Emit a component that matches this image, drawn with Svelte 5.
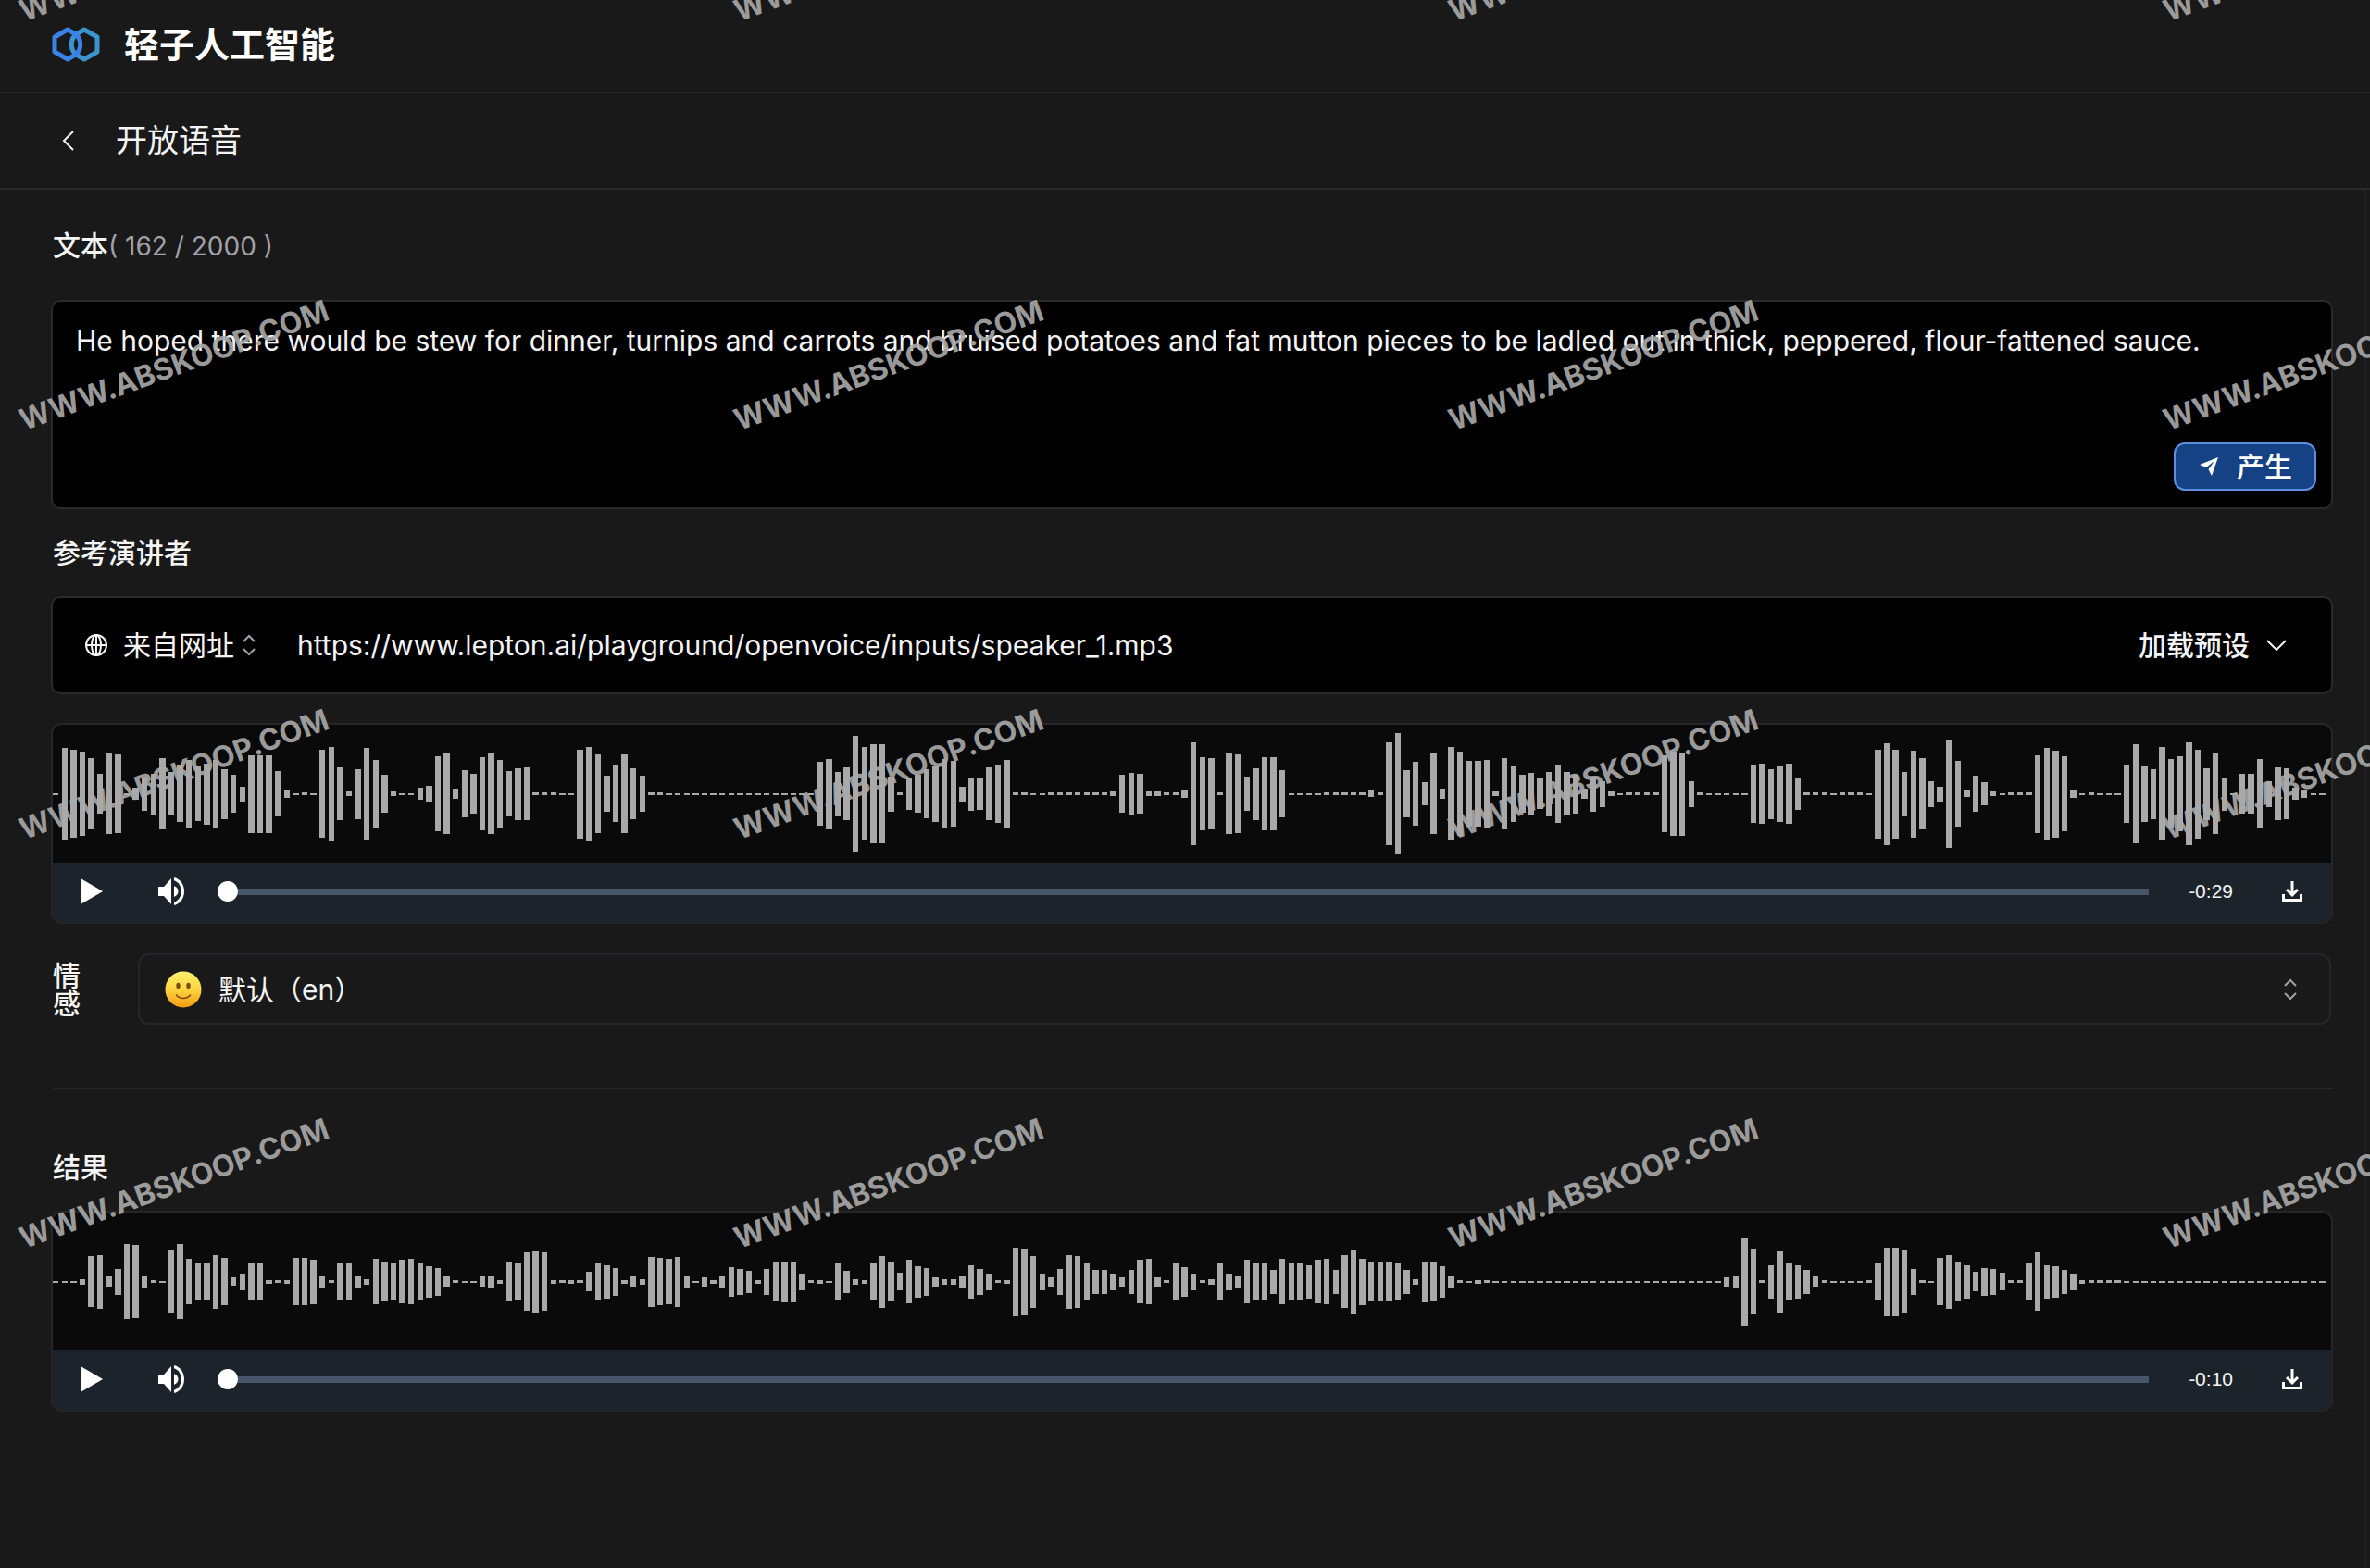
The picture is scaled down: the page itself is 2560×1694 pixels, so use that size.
<script>
  let text = 'He hoped there would be stew for dinner, turnips and carrots and bruised potatoes and fat mutton pieces to be ladled out in thick, peppered, flour-fattened sauce.';
  let url = 'https://www.lepton.ai/playground/openvoice/inputs/speaker_1.mp3';
  let source = 'url';
  let emotion = 'default';

  // bar heights, 256 per clip
  const speaker = [
    2, 99, 95, 91, 77, 43, 87, 85, 2, 13, 36, 44, 77, 47, 61, 74, 59, 66, 74, 54, 41, 16, 84, 84, 84, 49, 8, 2, 3, 2,
    95, 102, 57, 5, 54, 99, 73, 41, 5, 2, 2, 13, 17, 81, 87, 11, 51, 43, 79, 87, 73, 49, 56, 57, 3, 3, 3, 2, 2,
    96, 102, 85, 39, 61, 85, 55, 39, 3, 3, 2, 2, 2, 2, 2, 2, 2, 2, 2, 2, 2, 2, 2, 2, 2, 2, 2,
    69, 76, 48, 57, 126, 101, 107, 107, 38, 3, 34, 41, 53, 60, 75, 71, 16, 36, 34, 57, 62, 73,
    3, 3, 2, 2, 3, 3, 3, 3, 3, 3, 3, 5, 41, 46, 43, 5, 5, 3, 3, 8, 111, 79, 77, 3,
    87, 85, 37, 56, 79, 79, 51, 2, 2, 2, 2, 3, 3, 3, 3, 3, 7, 3, 111, 131, 51, 69, 25, 87, 11, 101, 91, 71, 71, 73, 5,
    77, 60, 41, 46, 33, 48, 62, 47, 42, 11, 38, 28, 5, 2, 3, 3, 3, 3, 83, 91, 90, 28, 3, 2, 2, 2, 2, 2,
    62, 65, 54, 60, 65, 34, 3, 3, 3, 2, 3, 3, 3, 2, 96, 110, 96, 48, 94, 77, 28, 16, 116, 71, 7, 39, 25, 5, 2, 3, 3, 3,
    84, 99, 94, 81, 9, 2, 3, 2, 2, 2, 62, 107, 60, 54, 101, 75, 81, 111, 96, 56, 87, 36, 2, 43, 43, 75, 28, 57, 55, 13, 8, 2, 2
  ];

  const result = [
    2, 2, 2, 6, 55, 58, 11, 28, 81, 79, 12, 3, 2, 69, 81, 49, 41, 39, 58, 51, 9, 18, 41, 39, 4, 3, 4,
    51, 51, 48, 12, 3, 39, 41, 12, 6, 49, 43, 41, 47, 49, 41, 34, 30, 11, 3, 2, 2, 11, 14, 4, 43, 41, 63, 66, 63,
    4, 3, 4, 3, 21, 41, 36, 30, 4, 11, 6, 54, 51, 49, 54, 12, 2, 10, 4, 12, 32, 28, 24, 4, 28, 43, 44, 44, 18, 3, 4, 2,
    41, 24, 6, 4, 39, 56, 43, 19, 47, 34, 30, 10, 6, 6, 14, 36, 28, 18, 3, 4, 74, 72, 56, 18, 10, 28, 58, 56, 39, 26, 26, 18, 10,
    26, 47, 49, 10, 3, 39, 32, 18, 3, 6, 41, 18, 12, 47, 41, 39, 26, 49, 39, 41, 36, 47, 49, 26, 57, 70, 50, 43, 43, 43, 41, 26, 6,
    44, 43, 34, 14, 3, 2, 4, 3, 2, 2, 2, 2, 2, 2, 2, 2, 2, 2, 2, 2, 2, 2, 2, 2, 2, 2, 2, 2, 2, 2, 2, 2, 2, 2,
    10, 14, 96, 71, 3, 36, 66, 39, 36, 26, 11, 3, 2, 2, 2, 2, 3, 39, 74, 74, 69, 28, 3, 2,
    51, 58, 43, 36, 21, 30, 28, 19, 3, 3, 41, 63, 36, 34, 26, 18, 4, 3, 3, 3, 3,
    2, 2, 2, 2, 2, 2, 2, 2, 2, 2, 2, 2, 2, 2, 2, 2, 2, 2, 2, 2, 2, 2, 2
  ];

  const marks = Array(16);
</script>

{#snippet updown()}
  <svg class="updown" viewBox="0 0 16 24" aria-hidden="true">
    <path d="M2 8l6-6 6 6M2 16l6 6 6-6" />
  </svg>
{/snippet}

{#snippet player(bars, time)}
  <div class="player">
    <svg class="wave" viewBox="0 0 384.500 149" preserveAspectRatio="none" aria-hidden="true">
      {#each bars as h, i}
        <rect x={i * 1.5} y={(149 - h) / 2} width="1" height={h} />
      {/each}
    </svg>
    <div class="controls">
      <button class="icon-btn play" aria-label="play">
        <svg viewBox="0 0 24 28"><path d="M0 0l24 14L0 28z" /></svg>
      </button>
      <button class="icon-btn volume" aria-label="volume">
        <svg viewBox="0 0 28 30">
          <path d="M0 10h6l8-9v28l-8-9H0z" />
          <path d="M17 9c3 1.400 4.500 3.400 4.500 6s-1.500 4.600-4.500 6z" />
          <path d="M17 0c6.800 1.600 11 7.500 11 15s-4.200 13.400-11 15v-3.300c4.700-1.500 7.800-6 7.800-11.700S21.700 4.800 17 3.300z" />
        </svg>
      </button>
      <input class="seek" type="range" min="0" max="100" value="0" aria-label="seek" />
      <span class="time">{time}</span>
      <button class="icon-btn download" aria-label="download">
        <svg viewBox="0 0 22 22"><path d="M11 0v14M5 9l6 6 6-6M1.500 14v6.500h19V14" /></svg>
      </button>
    </div>
  </div>
{/snippet}

<div class="page">
  <header class="topbar">
    <svg class="logo" viewBox="0 0 52 38" aria-hidden="true">
      <path class="right" d="M35 3l14 8v16l-14 8-7-4c-9-5-9-19 0-24z" />
      <path class="left" d="M17 3L3 11v16l14 8 7-4c9-5 9-19 0-24z" />
    </svg>
    <h1>轻子人工智能</h1>
  </header>

  <nav class="subbar">
    <button class="icon-btn back" aria-label="back">
      <svg viewBox="0 0 14 22"><path d="M12 1L2 11l10 10" /></svg>
    </button>
    <h2>开放语音</h2>
  </nav>

  <main>
    <label class="label" for="text">文本<span class="count">( {text.length} / 2000 )</span></label>
    <div class="editor">
      <textarea id="text" bind:value={text} spellcheck="false"></textarea>
      <button class="generate">
        <svg viewBox="0 0 20 20" aria-hidden="true">
          <path d="M20 0L13 20l-3.500-7L16 4 7 11 0 8z" />
        </svg>
        产生
      </button>
    </div>

    <label class="label" for="url">参考演讲者</label>
    <div class="urlbox">
      <svg class="globe" viewBox="0 0 24 24" aria-hidden="true">
        <circle cx="12" cy="12" r="11" />
        <ellipse cx="12" cy="12" rx="5" ry="11" />
        <path d="M12 1v22M1 12h22" />
      </svg>
      <select class="source" bind:value={source} aria-label="source">
        <option value="url">来自网址</option>
      </select>
      {@render updown()}
      <input id="url" type="text" bind:value={url} spellcheck="false" />
      <button class="preset">
        加载预设
        <svg viewBox="0 0 22 12" aria-hidden="true"><path d="M1 1l10 10L21 1" /></svg>
      </button>
    </div>

    {@render player(speaker, '-0:29')}

    <div class="emotion">
      <label for="emotion">情感</label>
      <div class="emotion-select">
        <svg class="smile" viewBox="0 0 40 40" aria-hidden="true">
          <defs>
            <linearGradient id="face" x1="0" y1="0" x2="0" y2="1">
              <stop offset="0" stop-color="#fff06e" />
              <stop offset="0.5" stop-color="#fed440" />
              <stop offset="1" stop-color="#f59a12" />
            </linearGradient>
          </defs>
          <circle cx="20" cy="20" r="19.500" fill="url(#face)" />
          <ellipse cx="14.500" cy="16" rx="2.200" ry="3.200" fill="#7a4a0c" />
          <ellipse cx="25.500" cy="16" rx="2.200" ry="3.200" fill="#7a4a0c" />
          <path d="M12.500 26c4 4.600 11 4.600 15 0" fill="none" stroke="#7a4a0c" stroke-width="1.600" stroke-linecap="round" />
        </svg>
        <select id="emotion" bind:value={emotion}>
          <option value="default">默认（en）</option>
        </select>
        {@render updown()}
      </div>
    </div>

    <hr />

    <h3 class="label">结果</h3>
    {@render player(result, '-0:10')}
  </main>

  <div class="watermark" aria-hidden="true">
    {#each marks as _}
      <span>WWW.ABSKOOP.COM</span>
    {/each}
  </div>
</div>

<style>
  :global(body) {
    margin: 0;
    background: #191919;
  }

  .page {
    position: relative;
    display: flex;
    flex-direction: column;
    min-height: 100vh;
    overflow: hidden;
    color: #f4f4f5;
    font-family: Inter, "Noto Sans CJK SC", sans-serif;
    font-size: 30px;
    line-height: 40px;
  }

  .page * {
    box-sizing: border-box;
  }

  h1,
  h2,
  h3 {
    margin: 0;
  }

  button,
  select,
  input,
  textarea {
    margin: 0;
    padding: 0;
    border: none;
    outline: none;
    background: none;
    color: inherit;
    font: inherit;
    appearance: none;
  }

  button {
    cursor: pointer;
  }

  svg {
    display: block;
    flex: none;
  }

  .topbar {
    display: flex;
    align-items: center;
    gap: 26px;
    height: 101px;
    padding: 0 56px 4px;
    border-bottom: 2px solid #2a2a2b;
  }

  .logo {
    width: 52px;
    height: 38px;
    fill: none;
    stroke-width: 5;
    stroke-linejoin: round;
  }

  .logo .left {
    stroke: #3b82e6;
  }

  .logo .right {
    stroke: #3a95cf;
  }

  h1 {
    font-size: 38px;
    font-weight: 700;
    color: #fff;
  }

  .subbar {
    display: flex;
    align-items: center;
    gap: 44px;
    height: 104px;
    padding: 0 67px;
    border-bottom: 2px solid #2a2a2b;
  }

  h2 {
    font-size: 34px;
    font-weight: 400;
  }

  .icon-btn {
    display: flex;
    flex: none;
    fill: #fff;
  }

  .back svg {
    width: 14px;
    height: 22px;
    fill: none;
    stroke: #f4f4f5;
    stroke-width: 2;
  }

  main {
    flex: 1;
    margin-right: 5px;
    padding: 40px 33px 40px 55px;
    border-right: 2px solid #232326;
  }

  .label {
    display: block;
    padding-left: 2px;
    font-size: 30px;
    font-weight: 500;
  }

  .count {
    font-size: 28px;
    font-weight: 400;
    color: #a1a1aa;
  }

  .editor {
    position: relative;
    height: 226px;
    margin: 38px 0 27px;
  }

  textarea {
    display: block;
    width: 100%;
    height: 100%;
    padding: 22px 25px;
    border: 2px solid #2a2a2b;
    border-radius: 10px;
    background: #000;
    resize: none;
  }

  .generate {
    position: absolute;
    right: 18px;
    bottom: 20px;
    display: flex;
    align-items: center;
    gap: 20px;
    height: 52px;
    padding: 0 24px 0 26px;
    border: 2px solid #5f8fdf;
    border-radius: 12px;
    background: #144284;
    color: #fff;
    font-weight: 500;
  }

  .generate svg {
    width: 20px;
    height: 20px;
    fill: #fff;
  }

  .urlbox {
    display: flex;
    align-items: center;
    height: 106px;
    margin: 27px 0 31px;
    padding: 0 48px 0 35px;
    border: 2px solid #2a2a2b;
    border-radius: 10px;
    background: #000;
  }

  .globe {
    width: 24px;
    height: 24px;
    margin-right: 17px;
    fill: none;
    stroke: #f4f4f5;
    stroke-width: 2;
  }

  .source {
    width: 128px;
  }

  .updown {
    width: 16px;
    height: 24px;
    fill: none;
    stroke: #a1a1aa;
    stroke-width: 2;
  }

  #url {
    flex: 1;
    min-width: 0;
    margin-left: 44px;
  }

  .preset {
    display: flex;
    align-items: center;
    gap: 18px;
    font-weight: 500;
  }

  .preset svg {
    width: 22px;
    height: 12px;
    fill: none;
    stroke: #f4f4f5;
    stroke-width: 2;
  }

  .player {
    border: 2px solid #252628;
    border-radius: 12px;
    overflow: hidden;
    background: #0a0a0a;
  }

  .wave {
    width: 100%;
    height: 149px;
    fill: #a9a9a9;
    shape-rendering: crispEdges;
  }

  .controls {
    display: flex;
    align-items: center;
    height: 64px;
    padding: 0 31px 2px 30px;
    background: #1c232b;
  }

  .play svg {
    width: 24px;
    height: 28px;
  }

  .volume {
    margin: 0 36px 0 60px;
  }

  .volume svg {
    width: 28px;
    height: 30px;
  }

  .seek {
    flex: 1;
    min-width: 0;
    height: 22px;
    background: linear-gradient(#48566a, #48566a) right center / calc(100% - 11px) 7px no-repeat;
  }

  .seek::-webkit-slider-thumb {
    width: 22px;
    height: 22px;
    border-radius: 50%;
    background: #fff;
    appearance: none;
  }

  .time {
    margin: 0 53px 0 43px;
    font-family: "Liberation Sans", Arial, sans-serif;
    font-size: 21px;
  }

  .download svg {
    width: 22px;
    height: 22px;
    fill: none;
    stroke: #fff;
    stroke-width: 3;
  }

  .emotion {
    display: flex;
    align-items: center;
    margin: 32px 2px 0;
  }

  .emotion label {
    width: 30px;
    margin-right: 62px;
    line-height: 30px;
    font-weight: 500;
  }

  .emotion-select {
    display: flex;
    flex: 1;
    align-items: center;
    height: 77px;
    padding: 0 34px 0 27px;
    border: 2px solid #26262a;
    border-radius: 12px;
  }

  .smile {
    width: 40px;
    height: 40px;
    margin-right: 18px;
  }

  #emotion {
    flex: 1;
  }

  hr {
    height: 2px;
    margin: 68px 0 64px 2px;
    border: none;
    background: #28282c;
  }

  h3.label {
    margin-bottom: 27px;
  }

  .watermark {
    position: absolute;
    top: -8px;
    left: 29px;
    display: grid;
    grid-template-columns: repeat(4, 772px);
    grid-auto-rows: 442px;
    pointer-events: none;
  }

  .watermark span {
    height: 40px;
    color: #aaa;
    font-family: Inter, sans-serif;
    font-size: 32px;
    font-weight: 700;
    opacity: 0.9;
    transform: rotate(-20deg);
    transform-origin: left bottom;
  }
</style>
